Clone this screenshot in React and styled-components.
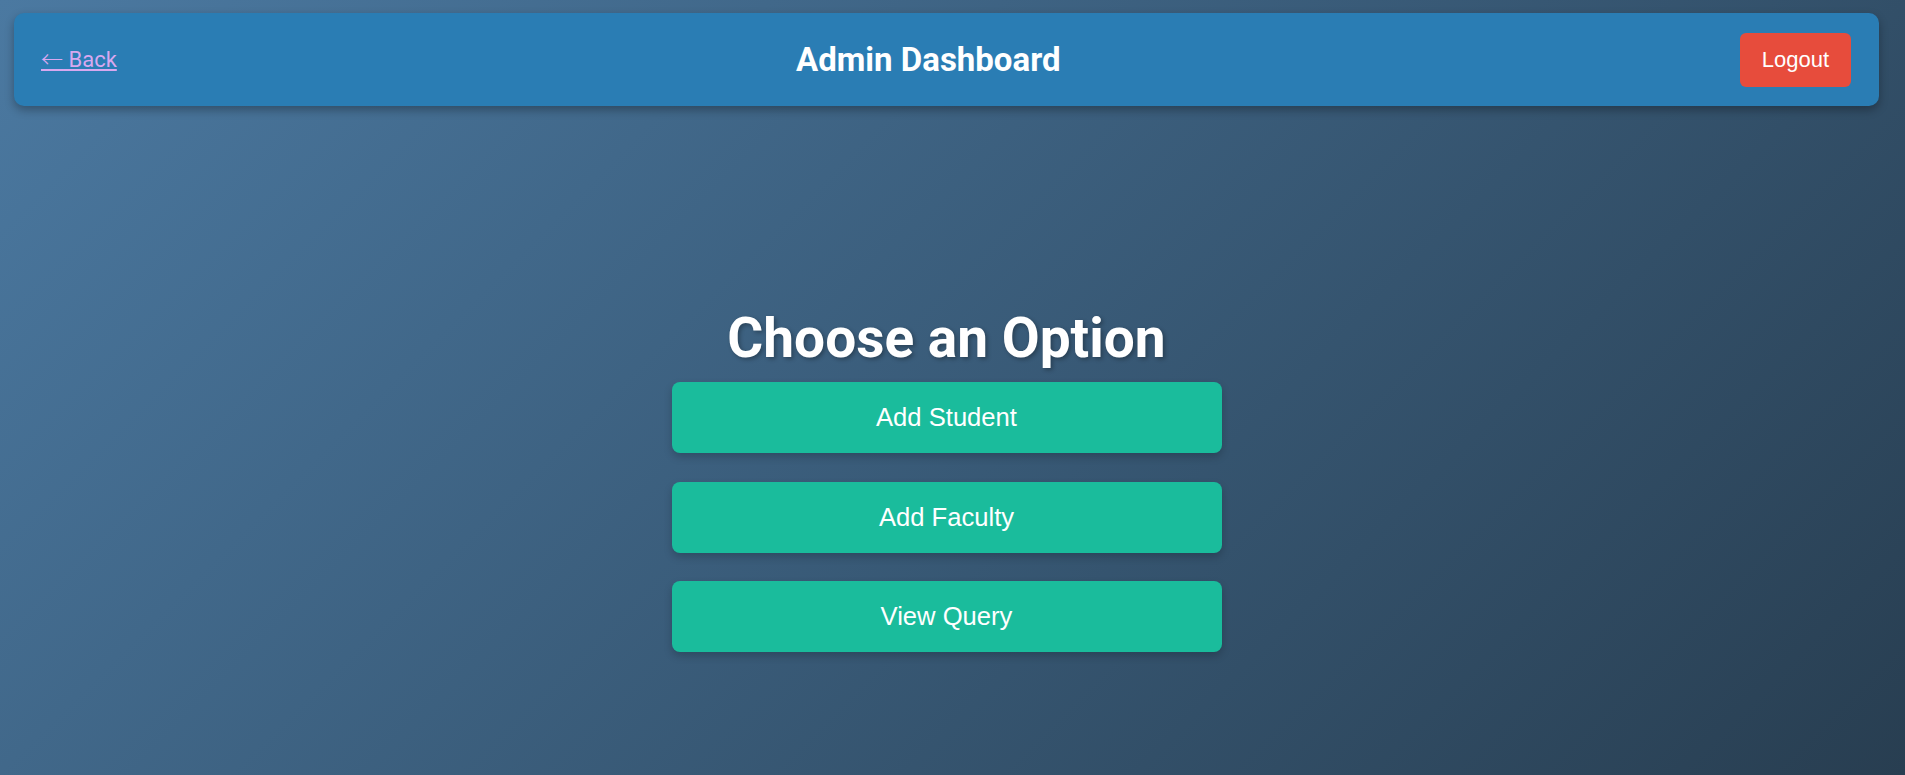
import React from "react";
import styled, { createGlobalStyle } from "styled-components";

const GlobalStyle = createGlobalStyle`
  html, body {
    margin: 0;
    padding: 0;
  }
  body {
    font-family: Roboto, "Noto Sans", sans-serif;
    min-height: 100vh;
    background: linear-gradient(135deg, #4b79a1, #283e51);
    background-attachment: fixed;
  }
  * { box-sizing: border-box; }
`;

const Page = styled.div`
  min-height: 100vh;
  padding: 13px 26px 0 14px;
  display: flex;
  flex-direction: column;
`;

const Header = styled.header`
  height: 93px;
  background: #2a7db4;
  border-radius: 10px;
  box-shadow: 0 4px 10px rgba(0, 0, 0, 0.3);
  padding: 0 28px 0 27px;
  display: flex;
  align-items: center;
  justify-content: space-between;
`;

const BackLink = styled.a`
  font-family: Roboto, sans-serif;
  font-size: 22px;
  color: #d8a8ef;
  text-decoration: underline;
  cursor: pointer;
`;

const Arrow = styled.span`
  font-family: "Noto Sans CJK JP", sans-serif;
  font-weight: 300;
  line-height: 0;
`;

const Title = styled.h1`
  margin: 0;
  font-family: Roboto, sans-serif;
  font-weight: 700;
  font-size: 33px;
  color: #ffffff;
`;

const LogoutButton = styled.button`
  font-family: "Liberation Sans", Arial, sans-serif;
  font-size: 22px;
  color: #ffffff;
  background: #e74c3c;
  border: none;
  border-radius: 6px;
  padding: 0 22px;
  height: 54px;
  cursor: pointer;
`;

const Main = styled.main`
  margin-top: 200px;
  display: flex;
  flex-direction: column;
  align-items: center;
`;

const Heading = styled.h2`
  margin: 0 0 12px;
  font-family: Roboto, sans-serif;
  font-weight: 700;
  font-size: 55px;
  color: #ffffff;
  text-shadow: 2px 2px 4px rgba(0, 0, 0, 0.3);
`;

const OptionList = styled.div`
  display: flex;
  flex-direction: column;
  gap: 28.5px;
`;

const OptionButton = styled.button`
  width: 550px;
  height: 71px;
  font-family: "Liberation Sans", Arial, sans-serif;
  font-size: 25.6px;
  color: #ffffff;
  background: #1abc9c;
  border: none;
  border-radius: 8px;
  box-shadow: 0 4px 8px rgba(0, 0, 0, 0.2);
  cursor: pointer;
`;

export default function App() {
  const options = ["Add Student", "Add Faculty", "View Query"];
  return (
    <>
      <GlobalStyle />
      <Page>
        <Header>
          <BackLink>
            <Arrow>←</Arrow> Back
          </BackLink>
          <Title>Admin Dashboard</Title>
          <LogoutButton>Logout</LogoutButton>
        </Header>
        <Main>
          <Heading>Choose an Option</Heading>
          <OptionList>
            {options.map((o) => (
              <OptionButton key={o}>{o}</OptionButton>
            ))}
          </OptionList>
        </Main>
      </Page>
    </>
  );
}
